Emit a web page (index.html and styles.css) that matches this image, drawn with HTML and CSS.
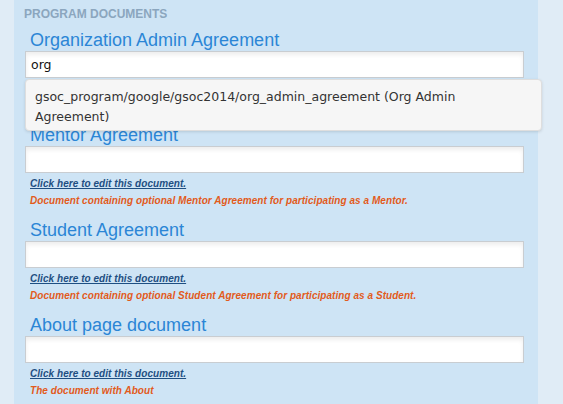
FILE: index.html
```html
<!DOCTYPE html>
<html lang="en">
<head>
<meta charset="utf-8">
<title>Program documents</title>
<link rel="stylesheet" href="styles.css">
</head>
<body>
<div class="page">
  <main class="panel">
    <h2 class="group-title">PROGRAM DOCUMENTS</h2>

    <section class="doc doc-ac">
      <h3 class="doc-title">Organization Admin Agreement</h3>
      <input class="doc-input" type="text" value="org">
      <ul class="suggest">
        <li>gsoc_program/google/gsoc2014/org_admin_agreement (Org Admin Agreement)</li>
      </ul>
    </section>

    <section class="doc">
      <h3 class="doc-title">Mentor Agreement</h3>
      <input class="doc-input" type="text" value="">
      <a class="doc-link" href="#">Click here to edit this document.</a>
      <p class="doc-desc">Document containing optional Mentor Agreement for participating as a Mentor.</p>
    </section>

    <section class="doc">
      <h3 class="doc-title">Student Agreement</h3>
      <input class="doc-input" type="text" value="">
      <a class="doc-link" href="#">Click here to edit this document.</a>
      <p class="doc-desc">Document containing optional Student Agreement for participating as a Student.</p>
    </section>

    <section class="doc">
      <h3 class="doc-title">About page document</h3>
      <input class="doc-input" type="text" value="">
      <a class="doc-link" href="#">Click here to edit this document.</a>
      <p class="doc-desc">The document with About</p>
    </section>
  </main>
</div>
</body>
</html>
```

FILE: styles.css
```css
html, body {
  margin: 0;
  padding: 0;
  height: 100%;
  overflow: hidden;
}

body {
  background: #e0ecf6;
  font-family: "Liberation Sans", Arial, sans-serif;
}

.page {
  display: flex;
  min-height: 100%;
}

.panel {
  margin-left: 14px;
  width: 524px;
  box-sizing: border-box;
  padding: 7px 14px 20px 11px;
  background: #cee4f5;
  display: flex;
  flex-direction: column;
}

.group-title {
  margin: 0 0 0 -1px;
  font-size: 12px;
  line-height: 14px;
  font-weight: bold;
  color: #8ba6be;
}

.doc {
  display: flex;
  flex-direction: column;
  align-items: flex-start;
  margin-top: 12px;
}

.group-title + .doc {
  margin-top: 8px;
}

.doc-ac {
  position: relative;
  z-index: 2;
  padding-bottom: 34px;
}

.doc-title {
  margin: 0 0 0 5px;
  font-size: 18px;
  line-height: 22px;
  font-weight: normal;
  color: #2b86d6;
}

.doc-input {
  box-sizing: border-box;
  width: 499px;
  height: 27px;
  margin: 0;
  padding: 0 5px;
  border: 1px solid #c9cdd1;
  background: #fff;
  box-shadow: inset 0 3px 4px rgba(0, 0, 0, 0.07);
  font-family: "DejaVu Sans", Verdana, sans-serif;
  font-size: 12.5px;
  color: #111;
  outline: none;
}

.doc-link {
  display: block;
  margin: 5px 0 0 5px;
  font-size: 10px;
  line-height: 12px;
  font-weight: bold;
  font-style: italic;
  letter-spacing: 0.05px;
  color: #1e4f82;
  text-decoration: underline;
}

.doc-desc {
  margin: 5px 0 0 5px;
  font-size: 10px;
  line-height: 12px;
  font-weight: bold;
  font-style: italic;
  letter-spacing: 0.05px;
  color: #e25b1c;
}

.suggest {
  position: absolute;
  top: 50px;
  left: 0;
  width: 517px;
  height: 52px;
  box-sizing: border-box;
  margin: 0;
  padding: 7px 9px 0 9px;
  list-style: none;
  background: #f6f6f6;
  border: 1px solid #dedede;
  border-radius: 4px;
  box-shadow: 0 1px 3px rgba(0, 0, 0, 0.12);
  font-family: "DejaVu Sans", Verdana, sans-serif;
  font-size: 12.5px;
  line-height: 20px;
  color: #333;
}
```
